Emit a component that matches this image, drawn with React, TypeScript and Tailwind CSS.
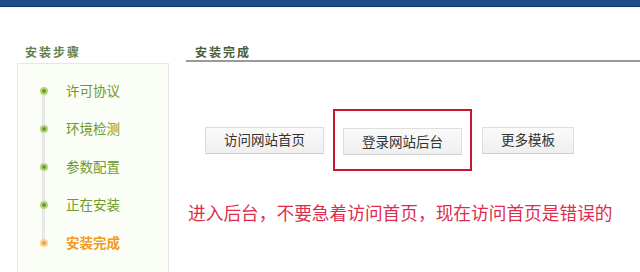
const steps = [
  { label: "许可协议", done: true },
  { label: "环境检测", done: true },
  { label: "参数配置", done: true },
  { label: "正在安装", done: true },
  { label: "安装完成", done: false },
];

function Dot({ active }: { active: boolean }) {
  return (
    <span
      className={`flex h-[8px] w-[8px] items-center justify-center rounded-full ${
        active ? "bg-[#fbd39c]" : "bg-[#b9d37e]"
      }`}
    >
      <span className={`h-[4px] w-[4px] rounded-full ${active ? "bg-[#f4a23c]" : "bg-[#6b9a28]"}`} />
    </span>
  );
}

function Button({ children, className = "" }: { children: React.ReactNode; className?: string }) {
  return (
    <button
      className={`h-[27px] border border-[#dedede] border-b-[#cfcfcf] bg-gradient-to-b from-[#fafafa] to-[#efefef] text-[13.5px] leading-none text-[#333] ${className}`}
    >
      {children}
    </button>
  );
}

export default function App() {
  return (
    <div
      className="h-[272px] w-[640px] overflow-hidden bg-white"
      style={{ fontFamily: '"Noto Sans CJK SC", "Noto Sans", sans-serif' }}
    >
      <div className="h-[6px] bg-[#1f4d8a]" />
      <div className="h-[1px] bg-[#163b6c]" />
      <div className="h-[1px] bg-[#f3f7f1]" />

      <div className="flex pt-[36px]">
        {/* left: steps */}
        <div className="ml-[17px] w-[152px] shrink-0">
          <div className="h-[19px] pl-[8px] text-[12px] leading-[16px] font-bold tracking-[2px] text-[#62804a]">
            安装步骤
          </div>
          <div className="border border-[#e5e8df] bg-[#fbfdf7] pt-[8px] pb-[30px]">
            <div className="relative">
              <div className="absolute top-[19px] bottom-[19px] left-[24px] w-[3px] border-x border-[#e2e2e2] bg-[#f0f0f0]" />
              {steps.map((s) => (
                <div key={s.label} className="relative flex h-[38px] items-center">
                  <div className="ml-[22px] flex w-[8px] justify-center">
                    <Dot active={!s.done} />
                  </div>
                  <span
                    className={`ml-[18px] text-[13.5px] leading-none ${
                      s.done ? "text-[#6e9b2c]" : "font-bold text-[#f39a1f]"
                    }`}
                  >
                    {s.label}
                  </span>
                </div>
              ))}
            </div>
          </div>
        </div>

        {/* right: content */}
        <div className="ml-[17px] flex-1">
          <div className="h-[18px] border-b-2 border-[#9a9a9a] pl-[9px] text-[12px] leading-[16px] font-bold tracking-[2px] text-[#46603a]">
            安装完成
          </div>

          <div className="mt-[47px] ml-[19px] flex items-center">
            <Button className="w-[119px]">访问网站首页</Button>
            <div className="ml-[9px] border-2 border-[#c8172e] px-[8px] pt-[17px] pb-[14px]">
              <Button className="w-[119px]">登录网站后台</Button>
            </div>
            <Button className="ml-[10px] w-[92px]">更多模板</Button>
          </div>

          <p className="mt-[29px] ml-[2px] text-[17.7px] leading-[24px] whitespace-nowrap text-[#de2d4c]">
            进入后台，不要急着访问首页，现在访问首页是错误的
          </p>
        </div>
      </div>
    </div>
  );
}
